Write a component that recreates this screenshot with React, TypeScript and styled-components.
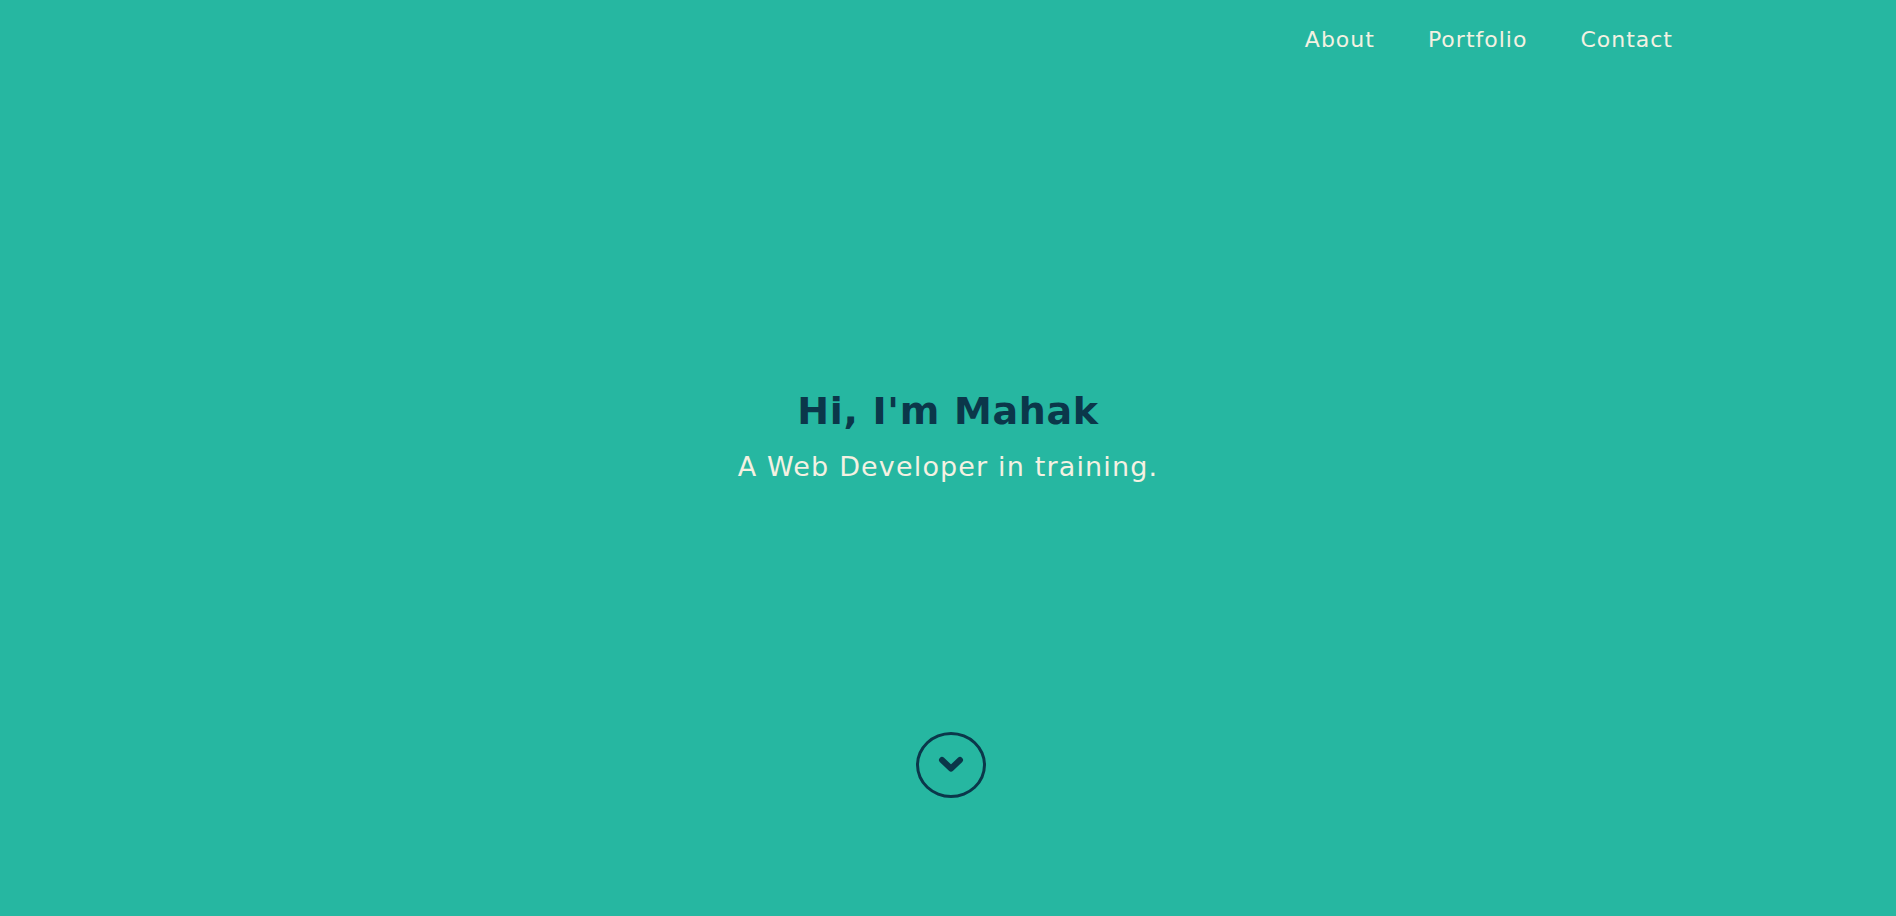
import styled, { createGlobalStyle } from "styled-components";

const GlobalStyle = createGlobalStyle`
  * { box-sizing: border-box; }
  html, body { margin: 0; padding: 0; }
  body {
    background: #26b7a1;
    font-family: "DejaVu Sans", Inter, sans-serif;
  }
`;

const Page = styled.div`
  min-height: 100vh;
  display: flex;
  flex-direction: column;
  background: #26b7a1;
`;

const Header = styled.header`
  display: flex;
  justify-content: flex-end;
  padding: 23px 223px 0 0;
  height: 78px;
`;

const Nav = styled.nav`
  display: flex;
  gap: 53px;
`;

const NavLink = styled.a`
  color: #f4f1e2;
  font-size: 22px;
  line-height: 33px;
  letter-spacing: 1px;
  font-weight: 400;
  text-decoration: none;
`;

const Hero = styled.main`
  flex: 1;
  display: flex;
  flex-direction: column;
  align-items: center;
  justify-content: center;
  padding-top: 61px;
  text-align: center;
`;

const Title = styled.h1`
  margin: 0;
  color: #0b374a;
  font-size: 38px;
  line-height: 48px;
  letter-spacing: 0.7px;
  font-weight: 700;
`;

const Subtitle = styled.p`
  margin: 15px 0 0;
  color: #f4f1e2;
  font-size: 27px;
  line-height: 34px;
  letter-spacing: 1.15px;
  font-weight: 400;
`;

const Footer = styled.div`
  display: flex;
  justify-content: center;
  padding: 0 0 118px 6px;
`;

const ScrollButton = styled.a`
  width: 70px;
  height: 66px;
  border: 3px solid #0b374a;
  border-radius: 50%;
  display: flex;
  align-items: center;
  justify-content: center;
  padding-bottom: 2px;
`;

const Chevron = () => (
  <svg width="26" height="17" viewBox="0 0 26 17">
    <path
      d="M4 4 L13 12.5 L22 4"
      fill="none"
      stroke="#0b374a"
      strokeWidth="6"
      strokeLinecap="round"
      strokeLinejoin="round"
    />
  </svg>
);

export default function App() {
  return (
    <Page>
      <GlobalStyle />
      <Header>
        <Nav>
          <NavLink href="#about">About</NavLink>
          <NavLink href="#portfolio">Portfolio</NavLink>
          <NavLink href="#contact">Contact</NavLink>
        </Nav>
      </Header>
      <Hero>
        <Title>Hi, I'm Mahak</Title>
        <Subtitle>A Web Developer in training.</Subtitle>
      </Hero>
      <Footer>
        <ScrollButton href="#about">
          <Chevron />
        </ScrollButton>
      </Footer>
    </Page>
  );
}
